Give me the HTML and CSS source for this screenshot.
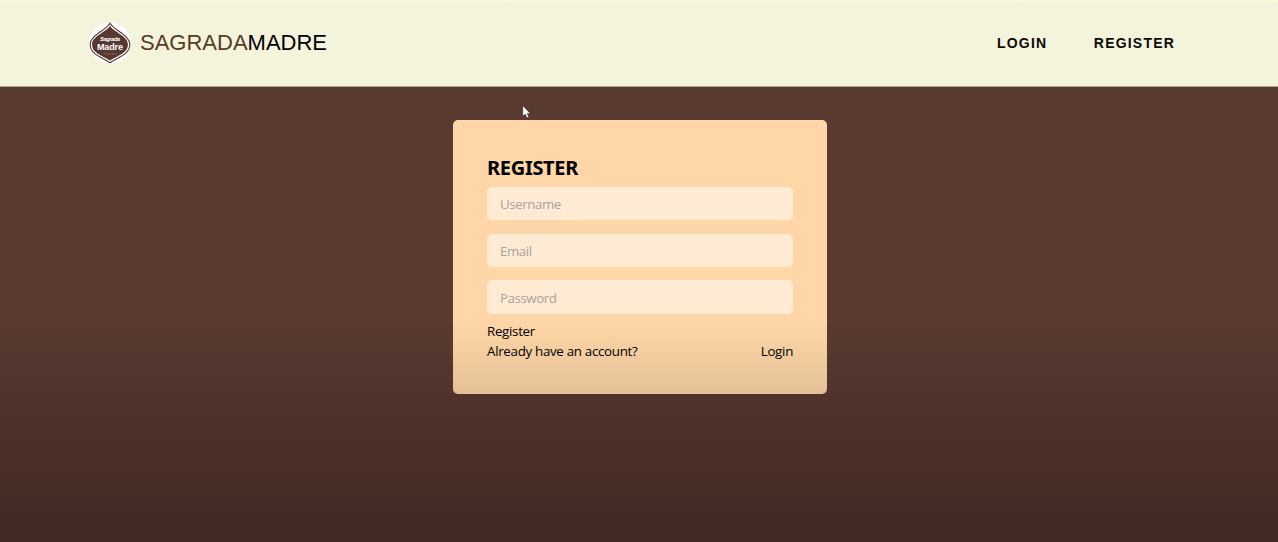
FILE: index.html
```html
<!DOCTYPE html>
<html lang="en">
<head>
<meta charset="utf-8">
<title>Sagrada Madre</title>
<link rel="stylesheet" href="styles.css">
</head>
<body>
<header class="navbar">
  <a class="brand">
    <svg class="logo" viewBox="0 0 42 42" width="42" height="42">
      <circle cx="21" cy="21" r="20.7" fill="#fff"/>
      <path d="M21 1.2C25 8.5 40.8 13 40.8 22.5C40.8 33 28 35.5 21 40.8C14 35.5 1.2 33 1.2 22.5C1.2 13 17 8.5 21 1.2Z" fill="#fff" stroke="#58382f" stroke-width="1.1"/>
      <path d="M21 3.8C25 10.5 38.9 14 38.9 22.4C38.9 31.5 27.5 33.8 21 38.6C14.5 33.8 3.1 31.5 3.1 22.4C3.1 14 17 10.5 21 3.8Z" fill="#58382f"/>
      <text class="logo-small" x="21" y="19.3" text-anchor="middle" textLength="20">Sagrada</text>
      <text class="logo-large" x="21" y="27.6" text-anchor="middle" textLength="26">Madre</text>
      <path d="M14.5 32H27.5" stroke="#a98f84" stroke-width=".8" stroke-dasharray="1.2 .8"/>
    </svg>
    <span class="brand-name"><span class="brand-first">SAGRADA</span>MADRE</span>
  </a>
  <nav class="links">
    <a class="link-login">LOGIN</a>
    <a class="link-register">REGISTER</a>
  </nav>
</header>
<main class="page">
  <form class="card">
    <h1 class="title">REGISTER</h1>
    <input class="field" type="text" placeholder="Username">
    <input class="field" type="email" placeholder="Email">
    <input class="field" type="password" placeholder="Password">
    <div class="row"><a class="submit">Register</a></div>
    <div class="row"><span>Already have an account?</span><a>Login</a></div>
  </form>
</main>
<div class="shade"></div>
<svg class="cursor" viewBox="0 0 9 14" width="9" height="14"><path d="M.8 .8V11.2L3.2 9L5 12.8L6.8 12L5.1 8.4H8.2Z" fill="#fff" stroke="#2b1b17" stroke-width=".4"/></svg>
</body>
</html>
```
FILE: styles.css
```css
* {
  box-sizing: border-box;
}

body {
  margin: 0;
  height: 542px;
  overflow: hidden;
  position: relative;
  display: flex;
  flex-direction: column;
  background: #583a30;
  font-family: "Open Sans", "Noto Sans", sans-serif;
}

.navbar {
  height: 87px;
  flex: none;
  display: flex;
  justify-content: space-between;
  align-items: center;
  padding: 0 103px 0 89px;
  background: linear-gradient(#f6fbd8 0, #f6f2db 5px, #f4f4dc 12px);
  border-bottom: 1px solid #b5a696;
  font-family: "Liberation Sans", Arial, sans-serif;
}

.brand {
  display: flex;
  align-items: center;
  gap: 9px;
}

.brand-name {
  font-size: 22px;
  line-height: 30px;
  color: #000;
}

.brand-first {
  color: #583a24;
}

.logo-small,
.logo-large {
  fill: #fff;
  font-family: "Liberation Sans", Arial, sans-serif;
  font-weight: bold;
}

.logo-small {
  font-size: 5.8px;
  font-style: italic;
}

.logo-large {
  font-size: 9px;
}

.links {
  display: flex;
  gap: 46.5px;
  font-size: 14px;
  font-weight: bold;
  letter-spacing: 1.2px;
  color: #0c0a06;
}

.page {
  flex: 1;
  display: flex;
  justify-content: center;
  align-items: flex-start;
  padding: 33px 0 0 2px;
}

.card {
  width: 374px;
  height: 274px;
  padding: 33px 34px 0 34px;
  border-radius: 5px;
  background: #fed6a7;
  font-size: 13.33px;
  letter-spacing: -0.3px;
  color: #000;
}

.title {
  margin: 0 0 5px;
  font-family: "Noto Sans", sans-serif;
  font-size: 20px;
  line-height: 29px;
  font-weight: bold;
  letter-spacing: -0.3px;
}

.field {
  display: block;
  width: 100%;
  height: 33px;
  margin: 0 0 14px;
  padding: 1px 13px 0;
  border: 0;
  border-radius: 5px;
  background: #ffebd3;
  font: inherit;
  letter-spacing: -0.45px;
}

.field:nth-of-type(2) {
  margin-bottom: 13px;
}

.field:nth-of-type(3) {
  height: 34px;
  margin-bottom: 7px;
}

.field::placeholder {
  color: #a7a29f;
  opacity: 1;
}

.row {
  display: flex;
  justify-content: space-between;
  height: 20px;
  line-height: 20px;
}

.shade {
  position: absolute;
  inset: 320px 0 0;
  background: linear-gradient(transparent, rgba(10, 0, 5, 0.3));
  pointer-events: none;
}

.cursor {
  position: absolute;
  left: 522px;
  top: 105px;
}
```
